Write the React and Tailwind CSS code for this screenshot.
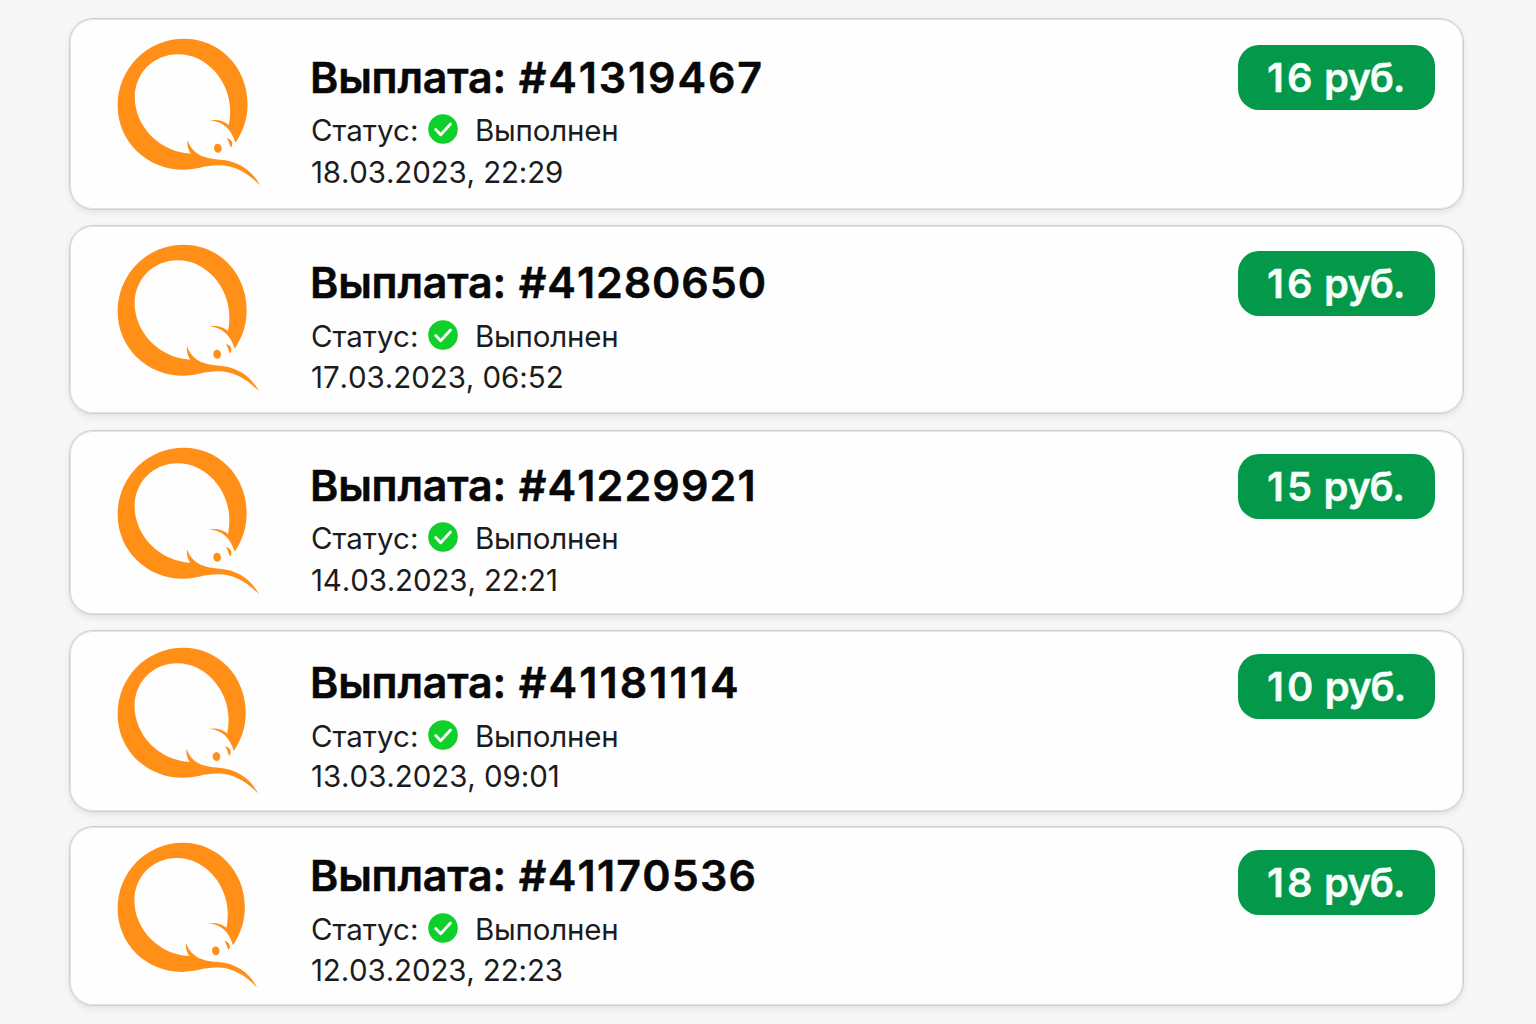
const payouts = [
  { id: '#41319467', date: '18.03.2023, 22:29', sum: ['16', 'руб.'], card: 'mt-[18px] h-[192px]', logo: 'mt-[18px] w-[144px] h-[148px]', text: 'mt-[31px]', track: 'tracking-[1.85px]', status: 'mt-[9px]', day: 'mt-[6px]', dayTrack: 'tracking-[-0.13px]', badge: 'mt-[25px]' },
  { id: '#41280650', date: '17.03.2023, 06:52', sum: ['16', 'руб.'], card: 'mt-[15px] h-[189px]', logo: 'mt-[17px] w-[143px] h-[148px]', text: 'mt-[29px]', track: 'tracking-[0.9px]', status: 'mt-[10px]', day: 'mt-[5px]', dayTrack: 'tracking-[-0.05px]', badge: 'mt-[24px]' },
  { id: '#41229921', date: '14.03.2023, 22:21', sum: ['15', 'руб.'], card: 'mt-[16px] h-[185px]', logo: 'mt-[15px] w-[143px] h-[148px]', text: 'mt-[27px]', track: 'tracking-[1.1px]', status: 'mt-[9px]', day: 'mt-[6px]', dayTrack: 'tracking-[-0.13px]', badge: 'mt-[22px]' },
  { id: '#41181114', date: '13.03.2023, 09:01', sum: ['10', 'руб.'], card: 'mt-[15px] h-[182px]', logo: 'mt-[15px] w-[142px] h-[147px]', text: 'mt-[24px]', track: 'tracking-[2.05px]', status: 'mt-[10px]', day: 'mt-[4px]', dayTrack: 'tracking-[-0.05px]', badge: 'mt-[22px]' },
  { id: '#41170536', date: '12.03.2023, 22:23', sum: ['18', 'руб.'], card: 'mt-[14px] h-[180px]', logo: 'mt-[14px] w-[141px] h-[146px]', text: 'mt-[21px]', track: 'tracking-[1.2px]', status: 'mt-[10px]', day: 'mt-[5px]', dayTrack: 'tracking-[-0.13px]', badge: 'mt-[22px]' },
];

function QLogo({ className }) {
  return (
    <svg viewBox="172 84 429 444" preserveAspectRatio="none" className={className} fill="#ff8f17">
      <path d="M525 398C549 362 561 325 561 282C561 172 478 86 372 86C262 86 174 175 174 287C174 395 262 479 370 479C412 479 432 466 475 466C525 466 562 490 598 526C575 480 530 452 480 449C440 446 400 440 382 391C380 405 384 420 392 431C300 427 225 350 225 262C225 190 280 133 355 133C438 133 508 212 509 300C509 318 508 330 505 345C490 333 470 327 449 332C485 332 512 355 525 398Z" />
      <ellipse cx="472.500" cy="415" rx="11.500" ry="13.500" transform="rotate(-8 472 415)" />
      <path d="M499 384C513 387 519 398 513 412C506 408 508 398 499 384Z" />
    </svg>
  );
}

function Check() {
  return (
    <svg viewBox="0 0 30 30" className="mr-[17px] mb-[2px] ml-[11px] h-[30px] w-[30px] shrink-0">
      <circle cx="15" cy="15" r="14.800" fill="#0fd02b" />
      <path d="M7.700 15.500l5 5.300L22.500 10" fill="none" stroke="#fff" strokeWidth="2.800" strokeLinecap="round" strokeLinejoin="round" />
    </svg>
  );
}

function Payout({ p }) {
  return (
    <article className={`${p.card} flex shrink-0 items-start rounded-[24px] border border-[#cecece] bg-[#fefefe] pt-px pr-[28px] pl-[47px] shadow-[inset_0_0_0_1px_#e4e4e4,0_3px_7px_rgba(0,0,0,0.08)]`}>
      <div className="w-[194px] shrink-0">
        <QLogo className={`${p.logo} block`} />
      </div>
      <div className={`${p.text} flex-1 whitespace-nowrap`}>
        <h2 className="-ml-px flex h-[52px] gap-[12.8px] text-[43px] leading-[52px] font-semibold text-[#080808] [-webkit-text-stroke:0.5px_#080808]">
          <span className="tracking-[-0.2px]">Выплата:</span>
          <span className={`${p.track} [font-kerning:none]`}>{p.id}</span>
        </h2>
        <div className={`${p.status} flex h-[36px] items-center text-[29.5px] leading-[36px] text-[#1c1c1c]`}>
          <span className="w-[106px]">Статус:</span>
          <Check />
          <span className="tracking-[-0.2px]">Выполнен</span>
        </div>
        <p className={`${p.day} ${p.dayTrack} text-[29.5px] leading-[36px] text-[#1c1c1c] [font-kerning:none]`}>{p.date}</p>
      </div>
      <div className={`${p.badge} flex h-[65px] w-[197px] shrink-0 items-center justify-start gap-[8px] rounded-[21px] bg-[#04984b] pl-[29px] text-[40px] leading-[48px] font-semibold whitespace-nowrap text-[#f7fffa] [font-kerning:none] [-webkit-text-stroke:0.4px_#f7fffa]`}>
        <span className="tracking-[3.2px]">{p.sum[0]}</span>
        <span className="tracking-[-1.3px]">{p.sum[1]}</span>
      </div>
    </article>
  );
}

export default function App() {
  return (
    <main className="flex h-[1024px] w-[1536px] flex-col overflow-hidden bg-[#f7f7f7] pr-[72px] pl-[69px] font-['Inter',sans-serif]">
      {payouts.map((p) => (
        <Payout key={p.id} p={p} />
      ))}
    </main>
  );
}
